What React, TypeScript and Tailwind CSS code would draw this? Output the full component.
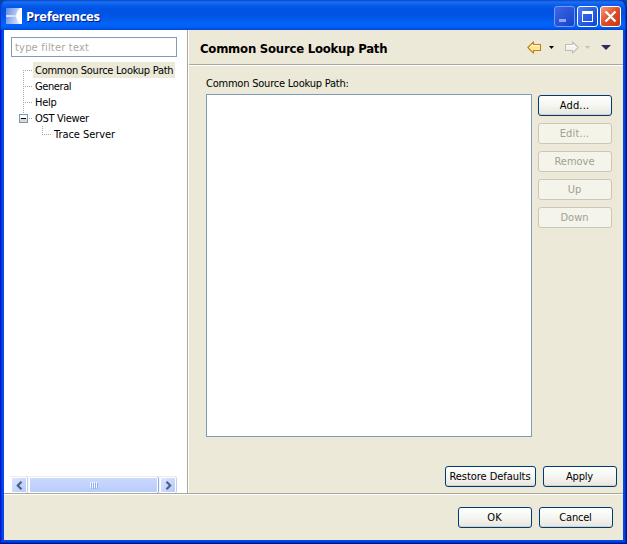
import type { ReactNode } from 'react';

function PushButton({ children, className = '', disabled = false }: { children: ReactNode; className?: string; disabled?: boolean }) {
  return (
    <button
      disabled={disabled}
      className={`flex h-[21px] shrink-0 items-center justify-center whitespace-nowrap rounded-[3px] border pr-px leading-none ${
        disabled
          ? 'border-[#c9c7ba] bg-[#f5f4ea] text-[#a1a192]'
          : 'border-[#003c74] bg-linear-to-b from-white via-[#f5f5f1] to-[#e8e6dd] text-black shadow-[0_0_0_1px_#e9e7d8,inset_0_-1px_0_#d6d0c5]'
      } ${className}`}
    >
      {children}
    </button>
  );
}

function TitleButton({ children, tone }: { children: ReactNode; tone: 'dim' | 'blue' | 'red' }) {
  const tones = {
    dim: 'border-[#7f96ed] bg-linear-to-br from-[#3a68e4] to-[#1640cb]',
    blue: 'border-white bg-linear-to-br from-[#4a7cf0] via-[#2a5ee4] to-[#0c46d4]',
    red: 'border-white bg-linear-to-br from-[#f0997c] via-[#df4b24] to-[#c53a10]',
  };
  return (
    <div className={`h-[21px] w-[21px] rounded-[3px] border ${tones[tone]}`}>
      <svg width="19" height="19" viewBox="0 0 19 19" className="block" shapeRendering="crispEdges">{children}</svg>
    </div>
  );
}

function ScrollButton({ d }: { d: string }) {
  return (
    <div className="flex h-[16px] w-[16px] items-center justify-center rounded-[2px] border border-white bg-linear-to-br from-[#dce6fe] to-[#b4cafa] shadow-[1px_0_0_#bdcdf3]">
      <svg width="9" height="9" viewBox="0 0 9 9" fill="none"><path d={d} stroke="#4d6185" strokeWidth="2.2" /></svg>
    </div>
  );
}

function TreeRow({ label, branch = 'middle', selected = false, className = 'tracking-[-0.3px]' }: { label: string; branch?: 'first' | 'middle' | 'expanded' | 'elbow'; selected?: boolean; className?: string }) {
  const trunks = { first: 'M12.5 8V16', middle: 'M12.5 0V16', expanded: 'M12.5 0V4', elbow: 'M12.5 0V9' };
  return (
    <div className="flex h-4 items-center">
      <svg width="22" height="16" className="block shrink-0" shapeRendering="crispEdges">
        <path d={trunks[branch]} stroke="#aca899" strokeDasharray="1 1" />
        <path d={branch === 'expanded' ? 'M18 8.5H21' : 'M14 8.5H21'} stroke="#aca899" strokeDasharray="1 1" />
        {branch === 'expanded' && (
          <>
            <rect x="8.5" y="4.5" width="8" height="8" rx="1" fill="#dedace" stroke="#7898b5" />
            <rect x="9" y="5" width="7" height="3" fill="#fff" />
            <path d="M10 8.5H15" stroke="#000" />
          </>
        )}
      </svg>
      <span className={`flex h-4 items-center whitespace-nowrap pl-[2px] leading-none ${selected ? 'bg-[#ece9d8]' : ''} ${className}`}>{label}</span>
    </div>
  );
}

function Arrow({ disabled = false }: { disabled?: boolean }) {
  return (
    <svg width="15" height="13" viewBox="0 0 15 13" className={`block ${disabled ? '-scale-x-100' : ''}`}>
      <path d="M.8 6.5L6.5 .9V3.5H13.5V9.5H6.5V12.1Z" fill={disabled ? '#f3f2ee' : '#ffe596'} stroke={disabled ? '#c0beb5' : '#c08214'} strokeWidth="1.1" strokeLinejoin="round" />
      <path d="M2.8 6.5L5.5 3.8V4.6H12.4" fill="none" stroke={disabled ? '#fff' : '#fff9dc'} />
    </svg>
  );
}

export default function App() {
  return (
    <div className="h-[544px] w-[627px] bg-[#04479a]">
      <div className="flex h-[544px] w-[627px] flex-col overflow-hidden rounded-t-[7px] bg-[#0046e2] font-['DejaVu_Sans_Condensed','DejaVu_Sans',sans-serif] text-[11px] text-black">
        <header className="flex h-[30px] shrink-0 items-center rounded-t-[7px] bg-[linear-gradient(to_bottom,#0b48c4_0%,#1c70f4_7%,#0a62ee_14%,#0054e3_28%,#0055e5_55%,#0364fb_80%,#0060f4_90%,#0046d8_100%)] pl-[6px] pr-[6px] pt-[2px] shadow-[inset_1px_0_0_#0831d0,inset_-1px_0_0_#00209c,inset_-2px_0_0_#0038c8]">
          <svg width="16" height="16" className="block shrink-0">
            <defs>
              <linearGradient id="logo" x1="0" y1="0" x2="1" y2=".3"><stop offset="0" stopColor="#5f88ea" /><stop offset=".6" stopColor="#a9c0f7" /><stop offset="1" stopColor="#e2eafd" /></linearGradient>
            </defs>
            <rect width="16" height="16" fill="url(#logo)" />
            <rect width="11" height="2" y="7" fill="#d4e0fb" />
            <path d="M16 0H14C9 5 9 11 14 16H16Z" fill="#fff" />
          </svg>
          <span className="ml-[4px] flex-1 pt-px font-['Open_Sans'] text-[13px] font-bold leading-none tracking-[-0.35px] text-white [text-shadow:1px_1px_0_#0a1883]">Preferences</span>
          <div className="flex gap-[2px]">
            <TitleButton tone="dim"><path d="M4 12h7v3H4z" fill="#8fa5f2" /></TitleButton>
            <TitleButton tone="blue"><path d="M4 4h11v11H4z M5 7v7h9V7z" fill="#fff" fillRule="evenodd" /></TitleButton>
            <TitleButton tone="red"><path d="M4.5 4.5L14.5 14.5M14.5 4.5L4.5 14.5" stroke="#fff" strokeWidth="2.4" shapeRendering="auto" /></TitleButton>
          </div>
        </header>

        <div className="flex min-h-0 flex-1 bg-[#001590] pb-px pr-px">
          <div className="flex flex-1 border-b border-l border-r border-b-[#002bc0] border-l-[#0019cf] border-r-[#0028bc] bg-[#0048e8] pb-[2px] pl-[3px] pr-[2px] shadow-[inset_1px_0_0_#0831d9]">
            <div className="flex w-[619px] shrink-0 flex-col bg-[#ece9d8]">
              <div className="flex h-[463px] shrink-0">
                <aside className="flex w-[183px] shrink-0 flex-col bg-white pt-[7px]">
                  <div className="ml-[7px] flex h-[20px] w-[166px] items-center border border-[#7f9db9] pl-[3px] leading-none tracking-[0.2px] text-[#aca899]">type filter text</div>
                  <div className="ml-[7px] mt-[5px] flex flex-col">
                    <TreeRow label="Common Source Lookup Path" branch="first" selected className="w-[142px] tracking-[-0.27px]" />
                    <TreeRow label="General" className="tracking-[-0.4px]" />
                    <TreeRow label="Help" />
                    <TreeRow label="OST Viewer" branch="expanded" />
                    <div className="pl-[19px]"><TreeRow label="Trace Server" branch="elbow" className="tracking-[-0.05px]" /></div>
                  </div>
                  <div className="ml-[7px] mt-auto flex h-[17px] w-[166px] items-center justify-between border-t border-[#eeede5] bg-[#f8f7f3] pr-px">
                    <ScrollButton d="M6.5 .8L2.8 4.5L6.5 8.2" />
                    <div className="flex h-[16px] w-[129px] items-center justify-center gap-px rounded-[2px] border border-white bg-linear-to-b from-[#cad8fe] to-[#b9cdfb] shadow-[1px_0_0_#8ba6dc]">
                      {[0, 1, 2, 3].map((n) => <i key={n} className="h-[6px] w-px bg-[#f2f6ff] shadow-[1px_1px_0_#8cb0f8]" />)}
                    </div>
                    <ScrollButton d="M2.5 .8L6.2 4.5L2.5 8.2" />
                  </div>
                </aside>
                <div className="w-[2px] shrink-0 border-l border-[#aca899] bg-white" />

                <main className="flex min-w-0 flex-1 flex-col">
                  <div className="flex h-[36px] shrink-0 items-center border-b border-white pl-[11px] shadow-[inset_0_-1px_0_#aca899]">
                    <h1 className="flex-1 whitespace-nowrap pt-px text-[13px] font-bold leading-none tracking-[-0.23px]">Common Source Lookup Path</h1>
                    <div className="flex items-center pr-[12px]">
                      <Arrow />
                      <svg width="5" height="3" className="ml-[7px]"><path d="M0 0H5L2.5 3Z" /></svg>
                      <div className="ml-[10px]"><Arrow disabled /></div>
                      <svg width="5" height="3" className="ml-[6px]"><path d="M0 0H5L2.5 3Z" fill="#c2c0b5" /></svg>
                      <svg width="10" height="5" className="ml-[11px]"><path d="M0 0H10L5 5Z" fill="#302c60" /></svg>
                    </div>
                  </div>
                  <div className="flex flex-col pl-[17px] pt-[10px]">
                    <label className="h-[18px] whitespace-nowrap leading-[15px] tracking-[-0.22px]">Common Source Lookup Path:</label>
                    <div className="flex gap-[6px]">
                      <div className="h-[343px] w-[326px] shrink-0 border border-[#7f9db9] bg-white" />
                      <div className="flex w-[74px] flex-col gap-[7px] pt-px">
                        <PushButton className="tracking-[0.15px]">Add...</PushButton>
                        <PushButton disabled className="tracking-[0.15px]">Edit...</PushButton>
                        <PushButton disabled>Remove</PushButton>
                        <PushButton disabled>Up</PushButton>
                        <PushButton disabled>Down</PushButton>
                      </div>
                    </div>
                  </div>
                  <div className="mt-auto flex justify-end gap-[7px] pb-[6px] pr-[6px]">
                    <PushButton className="w-[91px] tracking-[-0.05px]">Restore Defaults</PushButton>
                    <PushButton className="w-[74px] tracking-[-0.2px]">Apply</PushButton>
                  </div>
                </main>
              </div>
              <footer className="flex flex-1 items-start justify-end gap-[7px] border-t border-[#aca899] pr-[10px] pt-[13px] shadow-[inset_0_1px_0_#fff]">
                <PushButton className="w-[74px]">OK</PushButton>
                <PushButton className="w-[74px] tracking-[-0.2px]">Cancel</PushButton>
              </footer>
            </div>
          </div>
        </div>
      </div>
    </div>
  );
}
